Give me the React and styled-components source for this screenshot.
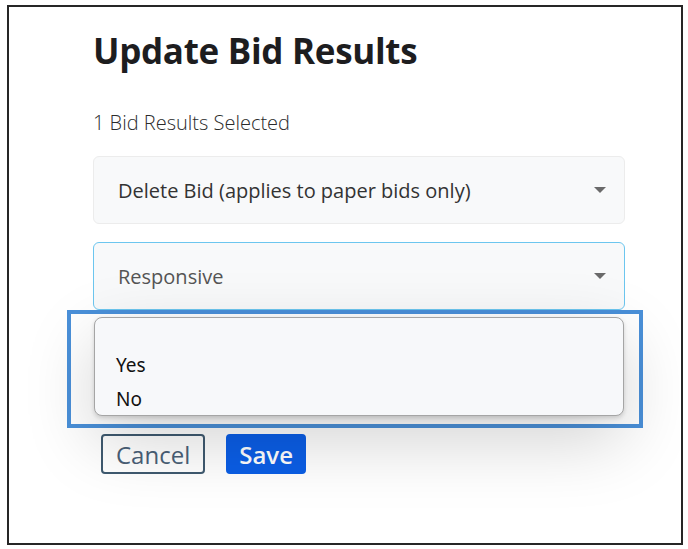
import React from 'react';
import styled, { createGlobalStyle } from 'styled-components';

const GlobalStyle = createGlobalStyle`
  html, body {
    margin: 0;
    padding: 0;
    background: #fff;
    font-family: "Open Sans", "Noto Sans", sans-serif;
  }
`;

const Frame = styled.div`
  position: relative;
  box-sizing: border-box;
  margin: 5px 0 0 7px;
  width: 676px;
  height: 540px;
  border: 2px solid #262626;
  background: #fff;
  overflow: hidden;
`;

const Content = styled.div`
  width: 532px;
  padding: 22px 0 0 84px;
  display: flex;
  flex-direction: column;
`;

const Heading = styled.h1`
  margin: 0;
  font-size: 35px;
  font-weight: 700;
  color: #1d1d1f;
  letter-spacing: -0.3px;
  line-height: 44px;
`;

const Subtitle = styled.p`
  margin: 37px 0 0;
  font-size: 20px;
  font-weight: 300;
  color: #2b2b2b;
  line-height: 26px;
`;

const Select = styled.div`
  box-sizing: border-box;
  height: 68px;
  margin-top: ${(p) => p.$gap}px;
  padding: 0 18px 0 24px;
  display: flex;
  align-items: center;
  justify-content: space-between;
  background: #f8f9fa;
  border: 1px solid ${(p) => (p.$focused ? '#6cc6ef' : '#ececec')};
  border-radius: 6px;
  font-size: 20px;
  color: ${(p) => (p.$focused ? '#555' : '#333')};
`;

const Caret = styled.span`
  width: 0;
  height: 0;
  border-left: 6px solid transparent;
  border-right: 6px solid transparent;
  border-top: 6px solid #6a6a6a;
`;

const PopupAnchor = styled.div`
  position: relative;
  height: 0;
`;

const Highlight = styled.div`
  position: absolute;
  top: 0;
  left: -26px;
  width: 576px;
  height: 118px;
  box-sizing: border-box;
  border: 4px solid #4a90d9;
  z-index: 2;
`;

const Listbox = styled.ul`
  position: absolute;
  top: 3px;
  left: 23px;
  box-sizing: border-box;
  width: 530px;
  height: 99px;
  margin: 0;
  padding: 30px 0 0 21px;
  list-style: none;
  background: #f7f8fa;
  border: 1.5px solid #a5a5a5;
  border-radius: 8px;
  box-shadow: 0 2px 4px rgba(0, 0, 0, 0.15), 0 24px 70px rgba(0, 0, 0, 0.18);
`;

const Option = styled.li`
  font-family: "Noto Sans", "Open Sans", sans-serif;
  font-size: 19px;
  line-height: 34px;
  color: #111;
`;

const Actions = styled.div`
  margin-top: 124px;
  margin-left: 8px;
  display: flex;
  gap: 21px;
`;

const Button = styled.button`
  box-sizing: border-box;
  height: 40px;
  padding: 0 ${(p) => (p.$primary ? 11 : 13)}px;
  border-radius: 4px;
  font-family: "Open Sans", "Noto Sans", sans-serif;
  font-size: 24px;
  font-weight: ${(p) => (p.$primary ? 600 : 500)};
  color: ${(p) => (p.$primary ? '#fff' : '#4a6077')};
  background: ${(p) => (p.$primary ? '#0b5ee6' : 'transparent')};
  border: 2px solid ${(p) => (p.$primary ? '#0b5ee6' : '#3f5a70')};
  cursor: pointer;
`;

export default function App() {
  return (
    <>
      <GlobalStyle />
      <Frame>
        <Content>
          <Heading>Update Bid Results</Heading>
          <Subtitle>1 Bid Results Selected</Subtitle>
          <Select $gap={20}>
            <span>Delete Bid (applies to paper bids only)</span>
            <Caret />
          </Select>
          <Select $gap={18} $focused>
            <span>Responsive</span>
            <Caret />
          </Select>
          <PopupAnchor>
            <Highlight>
              <Listbox>
                <Option>Yes</Option>
                <Option>No</Option>
              </Listbox>
            </Highlight>
          </PopupAnchor>
          <Actions>
            <Button>Cancel</Button>
            <Button $primary>Save</Button>
          </Actions>
        </Content>
      </Frame>
    </>
  );
}
